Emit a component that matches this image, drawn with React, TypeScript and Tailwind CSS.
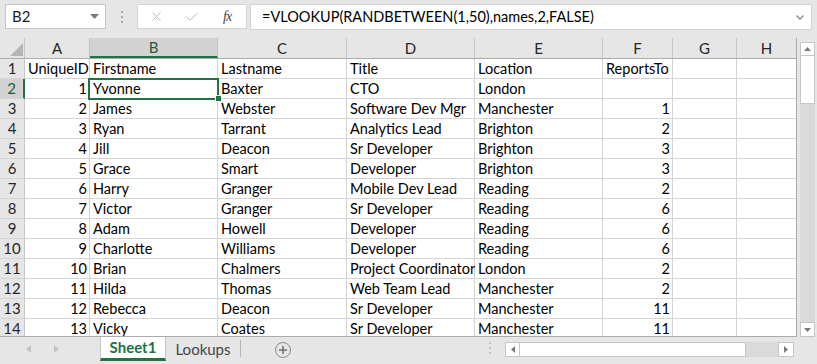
import { X, Check } from "lucide-react";

type Cell = { v: string; num?: boolean };

const COLS = [
  { key: "A", w: "w-[65px]" },
  { key: "B", w: "w-[128px]" },
  { key: "C", w: "w-[129px]" },
  { key: "D", w: "w-[128px]" },
  { key: "E", w: "w-[128px]" },
  { key: "F", w: "w-[70px]" },
  { key: "G", w: "w-[64px]" },
  { key: "H", w: "w-[60px]" },
];

const DATA: (string | number | null)[][] = [
  ["UniqueID", "Firstname", "Lastname", "Title", "Location", "ReportsTo"],
  [1, "Yvonne", "Baxter", "CTO", "London", null],
  [2, "James", "Webster", "Software Dev Mgr", "Manchester", 1],
  [3, "Ryan", "Tarrant", "Analytics Lead", "Brighton", 2],
  [4, "Jill", "Deacon", "Sr Developer", "Brighton", 3],
  [5, "Grace", "Smart", "Developer", "Brighton", 3],
  [6, "Harry", "Granger", "Mobile Dev Lead", "Reading", 2],
  [7, "Victor", "Granger", "Sr Developer", "Reading", 6],
  [8, "Adam", "Howell", "Developer", "Reading", 6],
  [9, "Charlotte", "Williams", "Developer", "Reading", 6],
  [10, "Brian", "Chalmers", "Project Coordinator", "London", 2],
  [11, "Hilda", "Thomas", "Web Team Lead", "Manchester", 2],
  [12, "Rebecca", "Deacon", "Sr Developer", "Manchester", 11],
  [13, "Vicky", "Coates", "Sr Developer", "Manchester", 11],
];

function toCells(row: (string | number | null)[]): Cell[] {
  const out: Cell[] = [];
  for (let i = 0; i < 8; i++) {
    const v = row[i];
    if (v == null) out.push({ v: "" });
    else if (typeof v === "number") out.push({ v: String(v), num: true });
    else out.push({ v });
  }
  return out;
}

function HeaderRow() {
  return (
    <div className="flex h-[21px] shrink-0 border-b border-[#ababab] bg-[#e6e6e6]">
      <div className="relative w-[25px] shrink-0 border-r border-[#c6c6c6]">
        <svg className="absolute left-[10px] top-[5px]" width="13" height="13" viewBox="0 0 13 13">
          <polygon points="13,0 13,13 0,13" fill="#b5b5b5" />
        </svg>
      </div>
      {COLS.map((c) => (
        <div
          key={c.key}
          className={`${c.w} shrink-0 flex items-center justify-center border-r border-[#c6c6c6] text-[15px] ${
            c.key === "B" ? "bg-[#d2d2d2] text-[#1e5c38] border-b-2 border-b-[#217346]" : "text-[#262626]"
          }`}
        >
          {c.key}
        </div>
      ))}
    </div>
  );
}

function DataRow({ n, cells }: { n: number; cells: Cell[] }) {
  const sel = n === 2;
  return (
    <div className="flex h-[20px] shrink-0">
      <div
        className={`w-[25px] shrink-0 flex items-center justify-center text-[15px] border-b border-[#d4d4d4] ${
          sel ? "bg-[#d2d2d2] text-[#1e5c38] border-r-2 border-r-[#217346]" : "bg-[#e6e6e6] text-[#262626] border-r border-r-[#c6c6c6]"
        }`}
      >
        {n}
      </div>
      {COLS.map((c, i) => (
        <div
          key={c.key}
          className={`${c.w} shrink-0 bg-white border-r border-b border-[#d4d4d4] flex items-center whitespace-nowrap text-[14.5px] text-black ${
            cells[i].num ? "justify-end pr-[2px]" : "pl-[3px]"
          }`}
        >
          {cells[i].v}
        </div>
      ))}
    </div>
  );
}

export default function App() {
  return (
    <div className="w-[817px] h-[364px] bg-[#e6e6e6] flex flex-col overflow-hidden font-['Lato',sans-serif] text-[15px]">
      {/* formula bar */}
      <div className="h-[38px] shrink-0 flex items-start pt-[4px] pl-[5px]">
        <div className="w-[101px] h-[25px] bg-white border border-[#c6c6c6] flex items-center pl-[6px] pr-[6px] justify-between">
          <span className="text-[#222]">B2</span>
          <svg width="9" height="5" viewBox="0 0 9 5">
            <polygon points="0,0 9,0 4.5,5" fill="#7a7a7a" />
          </svg>
        </div>
        <div className="w-[31px] h-[25px] flex flex-col items-center justify-center gap-[3px]">
          <div className="w-[2px] h-[2px] bg-[#a6a6a6]" />
          <div className="w-[2px] h-[2px] bg-[#a6a6a6]" />
          <div className="w-[2px] h-[2px] bg-[#a6a6a6]" />
        </div>
        <div className="w-[110px] h-[25px] bg-white border border-[#d4d4d4] flex items-center">
          <X size={15} strokeWidth={1.4} className="ml-[11px] text-[#b3b3b3]" />
          <Check size={16} strokeWidth={1.4} className="ml-[20px] text-[#b3b3b3]" />
          <span className="ml-[23px] font-['Liberation_Serif',serif] italic text-[14px] text-[#444] tracking-[-1px]">fx</span>
        </div>
        <div className="ml-[3px] w-[562px] h-[26px] bg-white border border-[#d4d4d4] flex items-center pl-[11px] pr-[7px] justify-between">
          <span className="text-black text-[14.5px]">=VLOOKUP(RANDBETWEEN(1,50),names,2,FALSE)</span>
          <svg width="8" height="5" viewBox="0 0 8 5">
            <polyline points="0.5,0.5 4,4 7.5,0.5" fill="none" stroke="#8a8a8a" strokeWidth="1.4" />
          </svg>
        </div>
      </div>

      {/* grid + vertical scrollbar */}
      <div className="h-[299px] shrink-0 flex">
        <div className="relative w-[797px] h-[299px] shrink-0 overflow-hidden border-r border-b border-[#ababab] flex flex-col">
          <HeaderRow />
          {DATA.map((r, i) => (
            <DataRow key={i} n={i + 1} cells={toCells(r)} />
          ))}
          {/* selected cell */}
          <div className="absolute left-[88px] top-[40px] w-[131px] h-[22px] border-2 border-[#217346] pointer-events-none" />
          <div className="absolute left-[215px] top-[57px] w-[7px] h-[7px] bg-[#217346] border border-white" />
        </div>
        <div className="w-[20px] h-[299px] flex flex-col items-center pt-[4px]">
          <div className="w-[15px] h-[14px] bg-white border border-[#c6c6c6] flex items-center justify-center">
            <svg width="7" height="4" viewBox="0 0 7 4">
              <polygon points="0,4 7,4 3.5,0" fill="#7a7a7a" />
            </svg>
          </div>
          <div className="w-[15px] h-[48px] bg-white border border-[#c6c6c6] border-t-0" />
          <div className="w-[15px] flex-1 bg-[#dadada]" />
          <div className="w-[15px] h-[15px] bg-white border border-[#c6c6c6] flex items-center justify-center">
            <svg width="7" height="4" viewBox="0 0 7 4">
              <polygon points="0,0 7,0 3.5,4" fill="#7a7a7a" />
            </svg>
          </div>
        </div>
      </div>

      {/* sheet tabs */}
      <div className="flex-1 flex items-start">
        <div className="w-[100px] h-[24px] flex items-center">
          <svg className="ml-[26px]" width="5" height="8" viewBox="0 0 5 8">
            <polygon points="5,0 5,8 0,4" fill="#c4c4c4" />
          </svg>
          <svg className="ml-[23px]" width="5" height="8" viewBox="0 0 5 8">
            <polygon points="0,0 0,8 5,4" fill="#c4c4c4" />
          </svg>
        </div>
        <div className="w-[66px] h-[25px] bg-white border-x border-[#c6c6c6] border-b-[3px] border-b-[#217346] flex items-center justify-center font-bold text-[#217346] -mt-[1px]">
          Sheet1
        </div>
        <div className="w-[74px] h-[24px] flex items-center justify-center text-[#444]">Lookups</div>
        <div className="w-[1px] h-[17px] mt-[3px] bg-[#b5b5b5]" />
        <div className="ml-[34px] mt-[5px] w-[16px] h-[16px] rounded-full border border-[#8a8a8a] flex items-center justify-center">
          <svg width="8" height="8" viewBox="0 0 8 8">
            <rect x="3.25" y="0" width="1.5" height="8" fill="#6e6e6e" />
            <rect x="0" y="3.25" width="8" height="1.5" fill="#6e6e6e" />
          </svg>
        </div>
        <div className="ml-[198px] mt-[5px] w-[2px] h-[14px] flex flex-col gap-[3px]">
          <div className="w-[2px] h-[2px] bg-[#c4c4c4]" />
          <div className="w-[2px] h-[2px] bg-[#c4c4c4]" />
          <div className="w-[2px] h-[2px] bg-[#c4c4c4]" />
        </div>
        <div className="ml-[14px] mt-[5px] flex h-[15px]">
          <div className="w-[15px] h-[15px] bg-white border border-[#c6c6c6] flex items-center justify-center">
            <svg width="4" height="7" viewBox="0 0 4 7">
              <polygon points="4,0 4,7 0,3.5" fill="#7a7a7a" />
            </svg>
          </div>
          <div className="w-[226px] h-[15px] bg-white border border-[#c6c6c6] border-l-0" />
          <div className="w-[32px] h-[15px] bg-[#dadada]" />
          <div className="w-[16px] h-[15px] bg-white border border-[#c6c6c6] flex items-center justify-center">
            <svg width="4" height="7" viewBox="0 0 4 7">
              <polygon points="0,0 0,7 4,3.5" fill="#7a7a7a" />
            </svg>
          </div>
        </div>
      </div>
    </div>
  );
}
